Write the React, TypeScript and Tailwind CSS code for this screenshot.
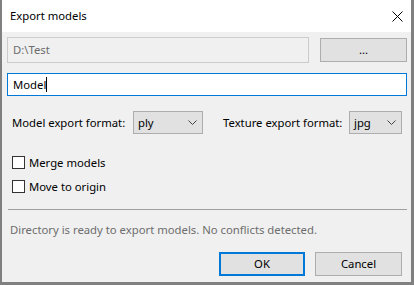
const font = "font-['Segoe_UI','Noto_Sans',sans-serif]";

function Chevron() {
  return (
    <svg width="9" height="5" viewBox="0 0 9 5" className="shrink-0">
      <path d="M0.5 0.5 L4.5 4.5 L8.5 0.5" fill="none" stroke="#444" strokeWidth="1" />
    </svg>
  );
}

function Combo({ value, width }: { value: string; width: string }) {
  return (
    <div
      className={`${width} h-[23px] flex items-center justify-between pl-[4px] pr-[5px] border border-[#adadad] bg-[#e1e1e1] text-black`}
    >
      <span>{value}</span>
      <Chevron />
    </div>
  );
}

function Check({ label }: { label: string }) {
  return (
    <div className="flex items-center h-[13px] ml-[5px]">
      <div className="w-[13px] h-[13px] border border-[#333333] bg-white shrink-0" />
      <span className="ml-[4px] whitespace-nowrap">{label}</span>
    </div>
  );
}

export default function App() {
  return (
    <div
      className={`w-[414px] h-[285px] flex flex-col bg-[#f0f0f0] border-l-2 border-r-[3px] border-b-[3px] border-[#808080] text-[11.3px] leading-[16px] text-black ${font}`}
    >
      <div className="h-[32px] shrink-0 bg-white flex items-center justify-between pl-[8px] pr-[8px]">
        <span>Export models</span>
        <svg width="11" height="11" viewBox="0 0 11 11">
          <path d="M0.5 0.5 L10.5 10.5 M10.5 0.5 L0.5 10.5" stroke="#000" strokeWidth="1" />
        </svg>
      </div>

      <div className="flex flex-col pl-[5px] pr-[4px]">
        <div className="flex items-start mt-[5px]">
          <div className="flex-1 h-[26px] border border-[#cccccc] bg-[#f0f0f0] flex items-center pl-[5px] text-[#6d6d6d]">
            D:\Test
          </div>
          <div className="w-[87px] h-[24px] mt-[1px] ml-[11px] border border-[#adadad] bg-[#e1e1e1] flex items-center justify-center">
            ...
          </div>
        </div>

        <div className="mt-[10px] h-[23px] border border-[#0078d7] bg-white flex items-center pl-[5px]">
          <span>Model</span>
          <span className="w-px h-[15px] bg-black" />
        </div>

        <div className="mt-[15px] flex items-center">
          <span className="ml-[5px] w-[121px] whitespace-nowrap">Model export format:</span>
          <Combo value="ply" width="w-[70px]" />
          <span className="ml-[20px] w-[126px] whitespace-nowrap">Texture export format:</span>
          <Combo value="jpg" width="w-[53px]" />
        </div>

        <div className="mt-[22px] flex flex-col gap-[11px]">
          <Check label="Merge models" />
          <Check label="Move to origin" />
        </div>

        <div className="mt-[16px] ml-[1px] h-px bg-[#a0a0a0]" />

        <p className="mt-[12px] ml-[3px] text-[#6d6d6d] whitespace-nowrap">
          Directory is ready to export models. No conflicts detected.
        </p>

        <div className="mt-[14px] mr-[5px] flex justify-end gap-[10px]">
          <button className="w-[86px] h-[24px] border-2 border-[#0078d7] bg-[#e1e1e1]">OK</button>
          <button className="w-[87px] h-[24px] border border-[#adadad] bg-[#e1e1e1]">Cancel</button>
        </div>
      </div>
    </div>
  );
}
